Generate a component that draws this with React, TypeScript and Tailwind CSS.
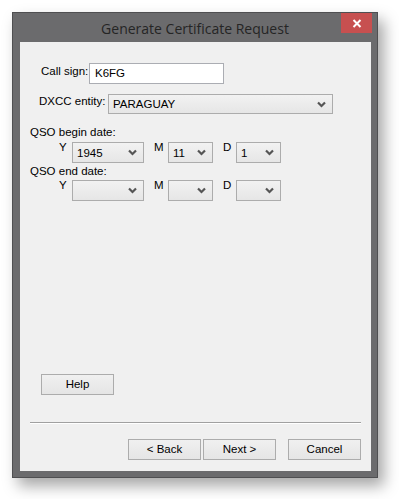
import React from 'react';

const ui = { fontFamily: "Tahoma, 'Liberation Sans', Arial, sans-serif" };

function Chevron() {
  return (
    <svg width="9" height="7" viewBox="0 0 9 7" className="shrink-0">
      <path d="M1 1.5 L4.5 5 L8 1.5" fill="none" stroke="#555" strokeWidth="2.2" />
    </svg>
  );
}

function Combo({ value, className }: { value?: string; className: string }) {
  return (
    <div
      className={`flex items-center justify-between border border-[#acacac] bg-gradient-to-b from-[#f2f2f2] to-[#e6e6e6] pl-[4px] pr-[6px] text-[11.5px] text-black ${className}`}
    >
      <span className="pt-[2px]">{value}</span>
      <Chevron />
    </div>
  );
}

function Btn({ label, className = '' }: { label: string; className?: string }) {
  return (
    <div
      className={`flex h-[21px] w-[73px] items-center justify-center border border-[#acacac] bg-gradient-to-b from-[#f0f0f0] to-[#e5e5e5] text-[11.5px] text-black ${className}`}
    >
      {label}
    </div>
  );
}

function DateRow({ y, m, d, className }: { y?: string; m?: string; d?: string; className: string }) {
  return (
    <div className={`flex items-start text-[11.5px] text-black ${className}`}>
      <span className="ml-[39px] w-[13px] leading-[11px]">Y</span>
      <Combo value={y} className="h-[21px] w-[72px]" />
      <span className="ml-[10px] w-[14px] leading-[11px]">M</span>
      <Combo value={m} className="h-[21px] w-[45px]" />
      <span className="ml-[10px] w-[13px] leading-[11px]">D</span>
      <Combo value={d} className="h-[21px] w-[45px]" />
    </div>
  );
}

export default function App() {
  return (
    <div className="h-[499px] w-[399px] bg-white pl-[12px] pt-[12px]">
      <div className="flex h-[466px] w-[366px] flex-col border border-[#4f4f51] bg-[#6b6b6d] shadow-[6px_8px_14px_rgba(0,0,0,0.35)]">
        {/* Title bar */}
        <div className="relative flex h-[29px] shrink-0 items-center justify-center">
          <span
            className="mt-[1px] text-[14px] text-[#252525]"
            style={{ fontFamily: "'Segoe UI', 'Open Sans', sans-serif" }}
          >
            Generate Certificate Request
          </span>
          <div className="absolute right-[5px] top-0 flex h-[20px] w-[31px] items-center justify-center bg-[#c75050]">
            <svg width="10" height="9" viewBox="0 0 10 9">
              <path d="M1.5 1 L8.5 8 M8.5 1 L1.5 8" stroke="white" strokeWidth="2" />
            </svg>
          </div>
        </div>

        {/* Client area */}
        <div className="mb-[6px] ml-[7px] mr-[6px] flex flex-1 flex-col bg-[#f0f0f0]" style={ui}>
          <div className="mt-[21px] flex items-center whitespace-nowrap text-[11.5px] text-black">
            <span className="ml-[21px] w-[48px] -mt-[4px]">Call sign:</span>
            <div className="flex h-[21px] w-[135px] items-center border border-[#abadb3] bg-white pl-[5px]">K6FG</div>
          </div>

          <div className="mt-[10px] flex items-center whitespace-nowrap text-[11.5px] text-black">
            <span className="ml-[19px] w-[69px] -mt-[4px]">DXCC entity:</span>
            <Combo value="PARAGUAY" className="h-[20px] w-[225px]" />
          </div>

          <div className="ml-[10px] mt-[12px] text-[11.5px] leading-[13px] text-black">QSO begin date:</div>
          <DateRow y="1945" m="11" d="1" className="mt-[3px]" />

          <div className="ml-[10px] mt-[2px] text-[11.5px] leading-[13px] text-black">QSO end date:</div>
          <DateRow className="mt-[2px]" />

          <div className="flex-1" />

          <Btn label="Help" className="ml-[21px]" />

          <div className="mx-[10px] mt-[27px] border-t border-[#a0a0a0] border-b border-b-white" />

          <div className="mb-[11px] mr-[10px] mt-[15px] flex justify-end">
            <Btn label="< Back" />
            <Btn label="Next >" className="ml-[2px]" />
            <Btn label="Cancel" className="ml-[12px]" />
          </div>
        </div>
      </div>
    </div>
  );
}
